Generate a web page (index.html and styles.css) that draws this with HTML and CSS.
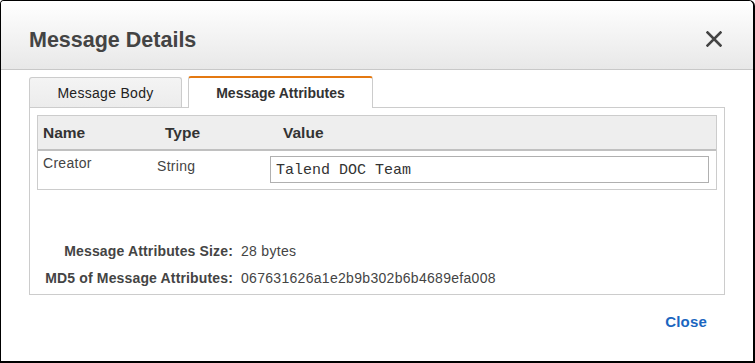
FILE: index.html
```html
<!DOCTYPE html>
<html lang="en">
<head>
  <meta charset="UTF-8" />
  <title>Message Details</title>
  <link rel="stylesheet" href="styles.css">
</head>
<body>
  <div class="dialog">
    <div class="dialog-header">
      <div class="dialog-title">Message Details</div>
      <svg class="close-x" width="16" height="16" viewBox="0 0 16 16">
        <path d="M1.5 1.5 L14.5 14.5 M14.5 1.5 L1.5 14.5" stroke="#444" stroke-width="2.6" stroke-linecap="square" fill="none"/>
      </svg>
    </div>
    <div class="dialog-body">
      <div class="tabs">
        <div class="tab">Message Body</div>
        <div class="tab tab-active">Message Attributes</div>
      </div>
      <div class="panel">
        <div class="attr-table">
          <div class="attr-head">
            <div class="col-name">Name</div>
            <div class="col-type">Type</div>
            <div class="col-value">Value</div>
          </div>
          <div class="attr-row">
            <div class="cell-name">Creator</div>
            <div class="cell-type">String</div>
            <div class="cell-value"><div class="value-box">Talend DOC Team</div></div>
          </div>
        </div>
        <div class="info">
          <div class="info-label">Message Attributes Size:</div>
          <div class="info-value">28 bytes</div>
          <div class="info-label">MD5 of Message Attributes:</div>
          <div class="info-value">067631626a1e2b9b302b6b4689efa008</div>
        </div>
      </div>
      <div class="dialog-footer">
        <a class="close-link" href="#">Close</a>
      </div>
    </div>
  </div>
</body>
</html>
```

FILE: styles.css
```css
* {
  box-sizing: border-box;
}
body {
  margin: 0;
  padding: 0;
  background: #fff;
  font-family: "Liberation Sans", Arial, sans-serif;
  font-size: 14px;
  line-height: 18px;
  letter-spacing: 0.3px;
  color: #444;
}
.dialog {
  width: 755px;
  height: 363px;
  border: 1px solid #000;
  border-right-width: 2px;
  border-bottom-width: 2px;
  border-radius: 4px 6px 0 0;
  background: #fff;
  overflow: hidden;
}
.dialog-header {
  height: 69px;
  background: linear-gradient(180deg, #ffffff 0%, #e8e8e8 100%);
  border-bottom: 1px solid #c8c8c8;
  display: flex;
  justify-content: space-between;
  align-items: flex-start;
  padding: 27px 31px 0 28px;
}
.dialog-title {
  font-size: 21.5px;
  line-height: 24px;
  font-weight: bold;
  letter-spacing: 0;
  color: #444;
}
.close-x {
  margin-top: 3px;
}
.dialog-body {
  padding: 6px 28px 0 28px;
}
.tabs {
  display: flex;
  align-items: flex-end;
  gap: 6px;
}
.tab {
  width: 153px;
  height: 30px;
  border: 1px solid #ccc;
  border-bottom: 0;
  border-radius: 3px 3px 0 0;
  background: linear-gradient(180deg, #f4f4f4 0%, #ececec 100%);
  color: #222;
  display: flex;
  align-items: center;
  justify-content: center;
  padding-top: 1px;
}
.tab-active {
  width: 185px;
  height: 32px;
  border-top: 2px solid #e47911;
  background: #fff;
  font-weight: bold;
  letter-spacing: 0;
  color: #333;
  margin-bottom: -1px;
  position: relative;
  z-index: 1;
  padding-top: 0;
}
.panel {
  border: 1px solid #ccc;
  padding: 7px 7px 2px 7px;
}
.attr-table {
  border: 1px solid #ccc;
}
.attr-head {
  display: flex;
  height: 35px;
  align-items: center;
  background: #eee;
  border-bottom: 2px solid #c0c0c0;
  font-size: 15.5px;
  font-weight: bold;
  letter-spacing: 0;
  color: #333;
}
.col-name {
  width: 122px;
  padding-left: 5px;
}
.col-type {
  width: 118px;
  padding-left: 5px;
}
.col-value {
  padding-left: 5px;
}
.attr-row {
  display: flex;
  height: 38px;
}
.cell-name {
  width: 114px;
  padding: 3px 0 0 5px;
}
.cell-type {
  width: 118px;
  padding: 6px 0 0 5px;
}
.cell-value {
  flex: 1;
  padding: 5px 7px 6px 0;
}
.value-box {
  height: 27px;
  border: 1px solid #b0b0b0;
  padding: 1px 5px 0 5px;
  font-family: "Liberation Mono", "Courier New", monospace;
  font-size: 15px;
  line-height: 25px;
  letter-spacing: 0;
  color: #333;
}
.info {
  display: grid;
  grid-template-columns: 196px 1fr;
  column-gap: 8px;
  margin-top: 48px;
  line-height: 27px;
}
.info-label {
  text-align: right;
  font-weight: bold;
  letter-spacing: 0.15px;
  color: #444;
}
.dialog-footer {
  display: flex;
  justify-content: flex-end;
  padding: 18px 18px 0 0;
}
.close-link {
  font-size: 15px;
  font-weight: bold;
  letter-spacing: 0.2px;
  color: #1a66c0;
  text-decoration: none;
}
```
